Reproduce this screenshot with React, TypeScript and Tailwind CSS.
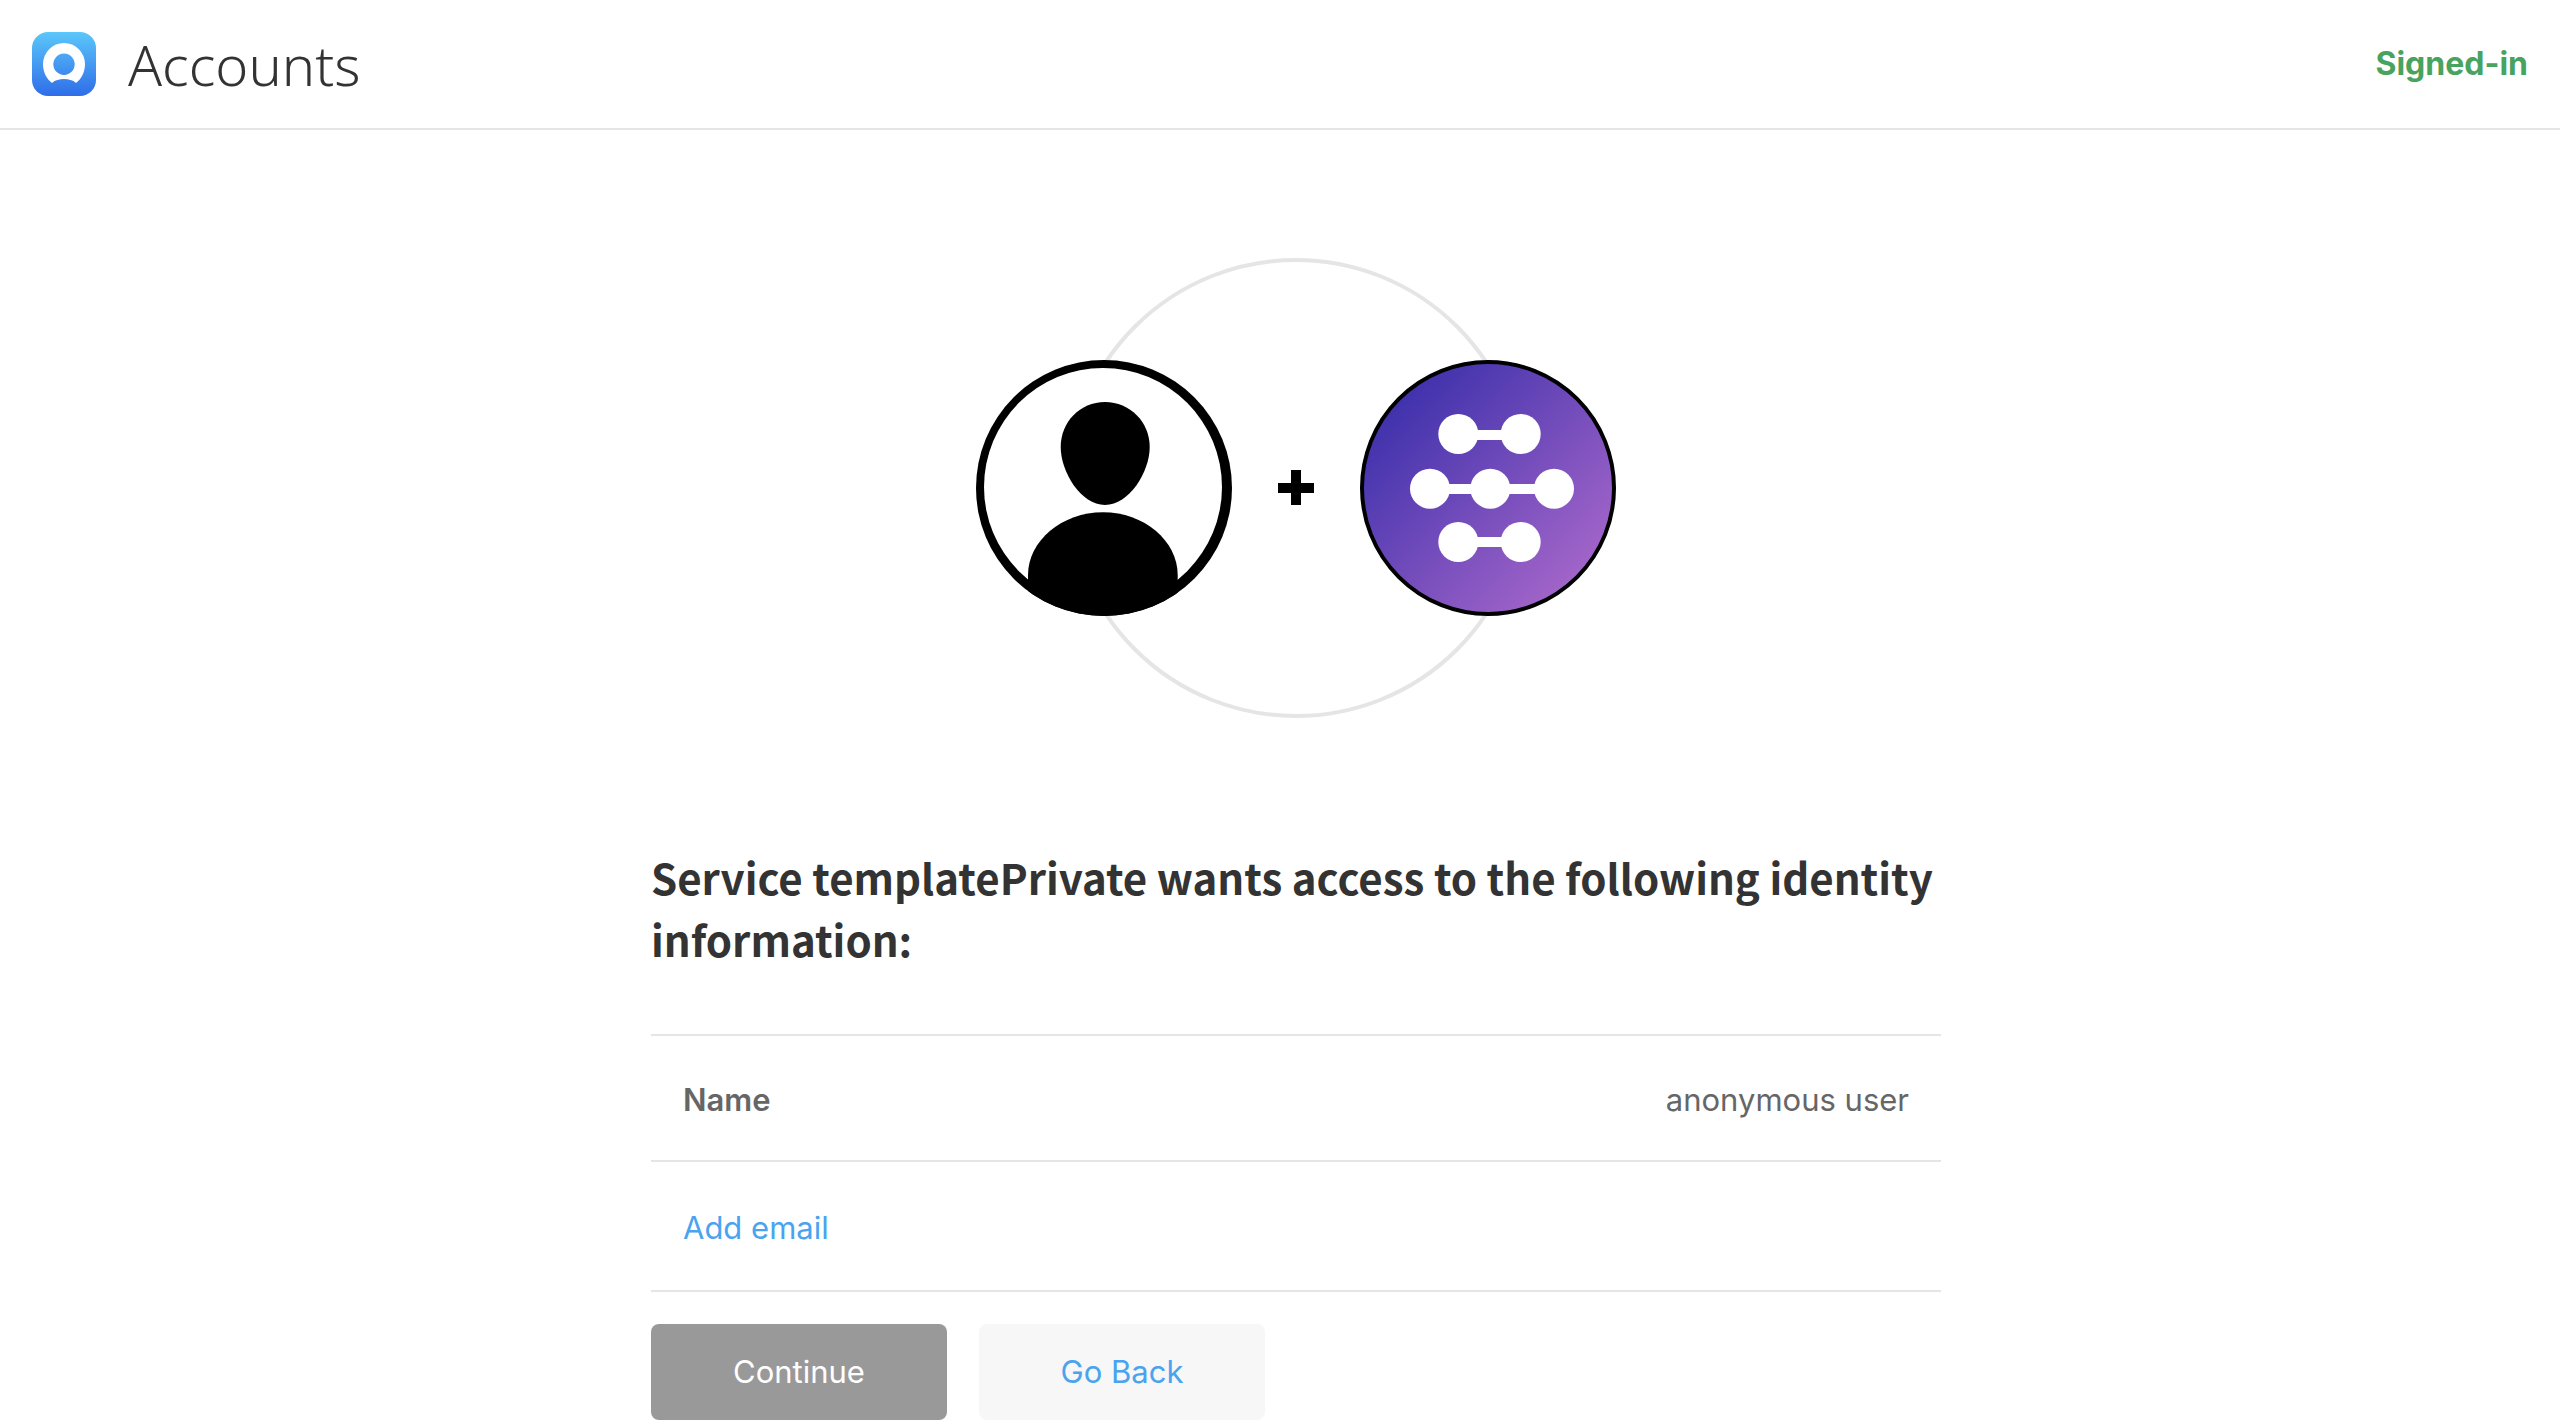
function AccountsLogo() {
  return (
    <svg className="size-16 shrink-0" viewBox="0 0 64 64" aria-hidden="true">
      <defs>
        <linearGradient id="logo-fill" x1="0" y1="0" x2="0" y2="1">
          <stop offset="0" stopColor="#5bc7fa" />
          <stop offset="1" stopColor="#2f6de9" />
        </linearGradient>
      </defs>
      <rect width="64" height="64" rx="16" fill="url(#logo-fill)" />
      <path
        fill="#fff"
        fillRule="evenodd"
        d="M20 51C14.5 47 11 40 11 32a21 21 0 0 1 42 0c0 8-3.500 15-9 19-3-3-7.500-4-12-4s-9 1-12 4ZM32 21.600a10.700 10.700 0 1 0 0 21.400a10.700 10.700 0 0 0 0-21.400Z"
      />
    </svg>
  );
}

function UserAvatar() {
  return (
    <svg className="size-64 shrink-0" viewBox="0 0 256 256" role="img" aria-label="User">
      <circle cx="128" cy="128" r="128" fill="#000" />
      <circle cx="127" cy="127" r="119" fill="#fff" />
      <clipPath id="avatar-clip">
        <circle cx="128" cy="128" r="128" />
      </clipPath>
      <path d="M129 42C154 42 173.700 62 173.700 87C173.700 112 153 145 129 145C105 145 84.700 112 84.700 87C84.700 62 104 42 129 42Z" />
      <path
        clipPath="url(#avatar-clip)"
        d="M52 256V215C52 181 86 152.300 127 152.300C168 152.300 201.700 181 201.700 215V256Z"
      />
    </svg>
  );
}

function ServiceLogo() {
  return (
    <svg className="size-64 shrink-0" viewBox="0 0 256 256" role="img" aria-label="Service">
      <defs>
        <linearGradient id="service-fill" gradientUnits="userSpaceOnUse" x1="34" y1="44" x2="226" y2="234">
          <stop offset="0" stopColor="#4032ac" />
          <stop offset="1" stopColor="#a968cb" />
        </linearGradient>
      </defs>
      <circle cx="128" cy="128" r="126" fill="url(#service-fill)" stroke="#000" strokeWidth="4" />
      <g stroke="#fff" strokeWidth="10">
        <path d="M98 75H161M70 129H194M98 182H161" />
      </g>
      <g fill="#fff">
        <circle cx="98.300" cy="74" r="20" />
        <circle cx="160.700" cy="74" r="20" />
        <circle cx="70" cy="128.700" r="20" />
        <circle cx="130.300" cy="128.700" r="20" />
        <circle cx="194" cy="128.700" r="20" />
        <circle cx="98.300" cy="182" r="20" />
        <circle cx="160.700" cy="182" r="20" />
      </g>
    </svg>
  );
}

function Plus() {
  return (
    <svg className="h-9 w-9 shrink-0" viewBox="0 0 36 36" aria-hidden="true">
      <path d="M13 0h10v13h13v10H23v12H13V23H0V13h13Z" />
    </svg>
  );
}

export default function App() {
  return (
    <div className="min-h-screen bg-white font-['Inter',sans-serif] text-[31px] leading-[48px] text-[#666]">
      <header className="flex items-center justify-between border-b-2 border-[#e5e5e5] px-8 py-8">
        <div className="flex items-center gap-8">
          <AccountsLogo />
          <h1 className="font-['Noto_Sans',sans-serif] text-[56px] leading-[60px] font-light text-[#333]">Accounts</h1>
        </div>
        <span className="text-[32px] font-bold text-[#48a35f]">Signed-in</span>
      </header>

      <main className="pt-32 pl-8">
        <div className="mx-auto max-w-[1290px]">
          <div className="relative flex h-[460px] items-center justify-center">
            <div className="absolute size-[460px] rounded-full border-4 border-[#e5e5e5]" />
            <div className="relative flex items-center gap-[46px]">
              <UserAvatar />
              <Plus />
              <ServiceLogo />
            </div>
          </div>

          <h2 className="mt-32 mb-16 font-['Noto_Sans_CJK_SC',sans-serif] text-[42px] leading-[62px] font-bold text-[#333]">
            Service templatePrivate wants access to the following identity information:
          </h2>

          <table className="w-full border-collapse border-y-2 border-[#e5e5e5]">
            <tbody>
              <tr className="h-[126px] border-b-2 border-[#e5e5e5]">
                <th scope="row" className="px-8 pt-1 text-left font-semibold">
                  Name
                </th>
                <td className="px-8 pt-1 text-right">anonymous user</td>
              </tr>
              <tr className="h-[130px]">
                <td colSpan={2} className="px-8 pt-1">
                  <a href="#email" className="text-[#4aa3ef]">
                    Add email
                  </a>
                </td>
              </tr>
            </tbody>
          </table>

          <div className="mt-8 flex gap-8">
            <button type="button" className="w-[296px] rounded-lg bg-[#999] py-6 text-white">
              Continue
            </button>
            <button type="button" className="w-[286px] rounded-lg bg-[#f7f7f7] py-6 text-[#4aa3ef]">
              Go Back
            </button>
          </div>
        </div>
      </main>
    </div>
  );
}
